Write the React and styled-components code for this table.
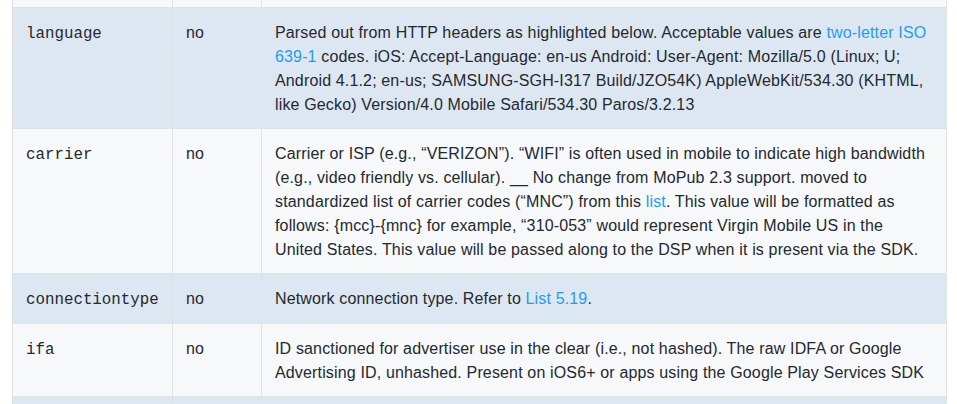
import React from "react";
import styled, { createGlobalStyle } from "styled-components";

const Global = createGlobalStyle`
  html, body {
    margin: 0;
    padding: 0;
    overflow: hidden;
    background: #ffffff;
  }
  body {
    font-family: "Liberation Sans", Arial, sans-serif;
    color: #24292e;
  }
`;

const Page = styled.div`
  width: 957px;
  height: 404px;
  overflow: hidden;
  padding-left: 12px;
  box-sizing: border-box;
`;

const Table = styled.table`
  margin-top: -43px;
  width: 934px;
  table-layout: fixed;
  border-collapse: collapse;
  font-size: 16px;
  line-height: 24px;
`;

const Row = styled.tr`
  background: ${(p) => (p.$alt ? "#dde7f2" : "#f6f8fa")};
`;

const Cell = styled.td`
  border: 1px solid #dfe2e5;
  padding: 13px 13px 11px;
  vertical-align: top;
  text-align: left;
  letter-spacing: 0.15px;
`;

const Code = styled.code`
  font-family: "Liberation Mono", "Courier New", monospace;
  font-size: 15.8px;
  letter-spacing: 0;
  color: #24292e;
`;

const Link = styled.a`
  color: #1e9df0;
  text-decoration: none;
`;

const rows = [
  {
    name: "flashver",
    req: "no",
    desc: "Version of Flash supported by the browser.",
  },
  {
    name: "language",
    req: "no",
    desc: (
      <>
        Parsed out from HTTP headers as highlighted below. Acceptable values are{" "}
        <Link href="#">two-letter ISO 639-1</Link> codes. iOS: Accept-Language: en-us
        Android: User-Agent: Mozilla/5.0 (Linux; U; Android 4.1.2; en-us;
        SAMSUNG-SGH-I317 Build/JZO54K) AppleWebKit/534.30 (KHTML, like Gecko)
        Version/4.0 Mobile Safari/534.30 Paros/3.2.13
      </>
    ),
  },
  {
    name: "carrier",
    req: "no",
    desc: (
      <>
        Carrier or ISP (e.g., “VERIZON”). “WIFI” is often used in mobile to indicate
        high bandwidth (e.g., video friendly vs. cellular). __ No change from MoPub
        2.3 support. moved to standardized list of carrier codes (“MNC”) from this{" "}
        <Link href="#">list</Link>. This value will be formatted as follows:
        {" {mcc}-{mnc} "}for example, “310-053” would represent Virgin Mobile US in the
        United States. This value will be passed along to the DSP when it is present
        via the SDK.
      </>
    ),
  },
  {
    name: "connectiontype",
    req: "no",
    desc: (
      <>
        Network connection type. Refer to <Link href="#">List 5.19</Link>.
      </>
    ),
  },
  {
    name: "ifa",
    req: "no",
    desc: "ID sanctioned for advertiser use in the clear (i.e., not hashed). The raw IDFA or Google Advertising ID, unhashed. Present on iOS6+ or apps using the Google Play Services SDK",
  },
  {
    name: "didsha1",
    req: "no",
    desc: "Hardware device ID (e.g., IMEI); hashed via SHA1.",
  },
];

export default function App() {
  return (
    <Page>
      <Global />
      <Table>
        <colgroup>
          <col style={{ width: 160 }} />
          <col style={{ width: 89 }} />
          <col style={{ width: 685 }} />
        </colgroup>
        <tbody>
          {rows.map((r, i) => (
            <Row key={r.name} $alt={i % 2 === 1}>
              <Cell>
                <Code>{r.name}</Code>
              </Cell>
              <Cell>{r.req}</Cell>
              <Cell>{r.desc}</Cell>
            </Row>
          ))}
        </tbody>
      </Table>
    </Page>
  );
}
